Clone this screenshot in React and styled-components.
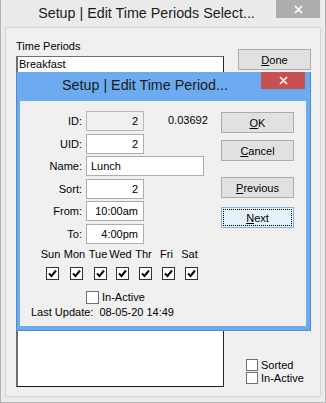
import React from 'react';
import styled, { createGlobalStyle } from 'styled-components';

const Global = createGlobalStyle`
  html, body {
    margin: 0;
    padding: 0;
    background: #fff;
    overflow: hidden;
  }
  body {
    font-family: "Liberation Sans", Arial, sans-serif;
    font-size: 11px;
    color: #000;
  }
`;

const Window = styled.div`
  position: relative;
  width: 326px;
  height: 403px;
  box-sizing: border-box;
  display: flex;
  flex-direction: column;
  background: #ebebeb;
  border: 1px solid #b4b4b4;
  border-top: none;
  padding: 0 4px 5px 4px;
`;

const TitleBar = styled.div`
  display: flex;
  height: ${p => p.$h}px;
  flex-shrink: 0;
  background: ${p => p.$bg};
`;

const Title = styled.div`
  flex: 1;
  display: flex;
  align-items: center;
  justify-content: center;
  padding-left: 12px;
  padding-bottom: ${p => p.$pb || 0}px;
  font-size: 14.3px;
  color: #1b1b1b;
  white-space: nowrap;
`;

const CloseBtn = styled.div`
  width: 44px;
  height: ${p => p.$h}px;
  margin-right: ${p => p.$mr}px;
  background: ${p => p.$bg};
  display: flex;
  align-items: center;
  justify-content: center;
`;

const Client = styled.div`
  flex: 1;
  display: flex;
  background: #f0f0f0;
  border: 1px solid #d6d6d6;
  padding: 12px 0 9px 10px;
`;

const LeftCol = styled.div`
  width: 208px;
  display: flex;
  flex-direction: column;
`;

const Caption = styled.div`
  line-height: 13px;
  margin-bottom: 3px;
`;

const ListBox = styled.div`
  flex: 1;
  box-sizing: border-box;
  background: #fff;
  border-style: solid;
  border-width: 1px 1px 1px 2px;
  border-color: #6e6e6e #262626 #1a1a1a #6e6e6e;
`;

const ListRow = styled.div`
  padding-left: 1px;
  line-height: 14px;
`;

const RightCol = styled.div`
  margin-left: 14px;
  padding-top: 9px;
  padding-bottom: 3px;
  display: flex;
  flex-direction: column;
`;

const Button = styled.div`
  box-sizing: border-box;
  width: 73px;
  height: 21px;
  margin-top: ${p => p.$mt || 0}px;
  display: flex;
  align-items: center;
  justify-content: center;
  background: ${p => (p.$focus ? '#e5f1fb' : '#e1e1e1')};
  border: 1px solid ${p => (p.$focus ? '#7eb4ea' : '#adadad')};
  padding: 2px;
`;

const FocusRing = styled.div`
  flex: 1;
  align-self: stretch;
  display: flex;
  align-items: center;
  justify-content: center;
  outline: ${p => (p.$on ? '1px dotted #000' : 'none')};
`;

const Checks = styled.div`
  margin-top: auto;
  margin-left: 8px;
  display: flex;
  flex-direction: column;
  gap: 1px;
`;

const CheckRow = styled.div`
  display: flex;
  align-items: center;
  gap: ${p => p.$gap || 3}px;
  line-height: 12px;
`;

const Box = styled.span`
  box-sizing: border-box;
  width: ${p => p.$size || 13}px;
  height: ${p => p.$size || 13}px;
  display: inline-flex;
  align-items: center;
  justify-content: center;
  background: #fff;
  border: 1px solid ${p => (p.$checked ? '#333' : '#707070')};
`;

const Dialog = styled.div`
  position: absolute;
  left: 15px;
  top: 72px;
  width: 295px;
  height: 259px;
  box-sizing: border-box;
  display: flex;
  flex-direction: column;
  background: #6cabef;
  border: 1px solid #4f8dd3;
  border-top: none;
`;

const DialogBody = styled.div`
  flex: 1;
  margin: 0 4px 4px 3px;
  background: #f0f0f0;
  display: flex;
  padding-top: 10px;
`;

const FormCol = styled.div`
  width: 201px;
  display: flex;
  flex-direction: column;
`;

const Fields = styled.div`
  display: grid;
  grid-template-columns: 62px auto;
  grid-auto-rows: 20px;
  column-gap: 4px;
  row-gap: 2.6px;
`;

const Label = styled.div`
  display: flex;
  align-items: center;
  justify-content: flex-end;
`;

const FieldCell = styled.div`
  display: flex;
  align-items: center;
`;

const Input = styled.input`
  box-sizing: border-box;
  width: ${p => p.$w}px;
  height: 20px;
  margin: 0;
  padding: 0 ${p => (p.$left ? 0 : 5)}px 0 ${p => (p.$left ? 4 : 0)}px;
  border: 1px solid ${p => (p.$ro ? '#b8b8b8' : '#adadad')};
  background: ${p => (p.$ro ? '#f0f0f0' : '#fff')};
  font-family: inherit;
  font-size: 11px;
  color: #000;
  text-align: ${p => (p.$left ? 'left' : 'right')};
  outline: none;
`;

const Note = styled.span`
  margin-left: 24px;
  margin-top: -2px;
`;

const Days = styled.div`
  display: grid;
  grid-template-columns: 23px 25px 22px 23px 23px 23px 23px;
  grid-template-rows: 13px 13px;
  row-gap: 6px;
  margin: 4px 0 0 21px;
`;

const DayName = styled.div`
  justify-self: center;
  padding-right: 4px;
  line-height: 13px;
`;

const DayBox = styled.div`
  justify-self: center;
  display: flex;
`;

const InactiveRow = styled(CheckRow)`
  margin-top: 11px;
  padding-left: 66px;
  line-height: 13px;
`;

const LastUpdate = styled.div`
  margin-top: 2px;
  padding-left: 11px;
  line-height: 13px;
  white-space: nowrap;
`;

const Stamp = styled.span`
  margin-left: 6px;
`;

const ButtonCol = styled.div`
  display: flex;
  flex-direction: column;
  padding-top: 1px;
`;

const Cross = () => (
  <svg width="9" height="9" viewBox="0 0 9 9">
    <path d="M1 1 L8 8 M8 1 L1 8" stroke="#fff" strokeWidth="1.7" />
  </svg>
);

const Tick = () => (
  <svg width="11" height="11" viewBox="0 0 11 11">
    <path d="M2 5.5 L4.5 8 L9 2.5" fill="none" stroke="#000" strokeWidth="2" />
  </svg>
);

const CheckBox = ({ checked, size }) => (
  <Box $checked={checked} $size={size}>{checked && <Tick />}</Box>
);

const days = ['Sun', 'Mon', 'Tue', 'Wed', 'Thr', 'Fri', 'Sat'];

const fields = [
  { label: 'ID:', value: '2', w: 58, ro: true, note: '0.03692' },
  { label: 'UID:', value: '2', w: 58 },
  { label: 'Name:', value: 'Lunch', w: 118, left: true },
  { label: 'Sort:', value: '2', w: 58 },
  { label: 'From:', value: '10:00am', w: 58 },
  { label: 'To:', value: '4:00pm', w: 58 },
];

const buttons = [
  { key: 'O', rest: 'K', mt: 0 },
  { key: 'C', rest: 'ancel', mt: 7 },
  { key: 'P', rest: 'revious', mt: 16 },
  { key: 'N', rest: 'ext', mt: 9, focus: true },
];

export default function App() {
  return (
    <>
      <Global />
      <Window>
        <TitleBar $h={27} $bg="#ebebeb">
          <Title $pb={2}>Setup | Edit Time Periods Select...</Title>
          <CloseBtn $h={18} $mr={1} $bg="#adadad"><Cross /></CloseBtn>
        </TitleBar>
        <Client>
          <LeftCol>
            <Caption>Time Periods</Caption>
            <ListBox>
              <ListRow>Breakfast</ListRow>
            </ListBox>
          </LeftCol>
          <RightCol>
            <Button><FocusRing><u>D</u>one</FocusRing></Button>
            <Checks>
              <CheckRow $gap={3}><CheckBox size={12} /><span>Sorted</span></CheckRow>
              <CheckRow $gap={3}><CheckBox size={12} /><span>In-Active</span></CheckRow>
            </Checks>
          </RightCol>
        </Client>

        <Dialog>
          <TitleBar $h={29} $bg="transparent">
            <Title $pb={4}>Setup | Edit Time Period...</Title>
            <CloseBtn $h={17} $mr={5} $bg="#c75050"><Cross /></CloseBtn>
          </TitleBar>
          <DialogBody>
            <FormCol>
              <Fields>
                {fields.map(f => (
                  <React.Fragment key={f.label}>
                    <Label>{f.label}</Label>
                    <FieldCell>
                      <Input readOnly value={f.value} $w={f.w} $ro={f.ro} $left={f.left} />
                      {f.note && <Note>{f.note}</Note>}
                    </FieldCell>
                  </React.Fragment>
                ))}
              </Fields>
              <Days>
                {days.map(d => <DayName key={d}>{d}</DayName>)}
                {days.map(d => <DayBox key={d + 'b'}><CheckBox checked /></DayBox>)}
              </Days>
              <InactiveRow $gap={3}><CheckBox /><span>In-Active</span></InactiveRow>
              <LastUpdate>Last Update:<Stamp>08-05-20 14:49</Stamp></LastUpdate>
            </FormCol>
            <ButtonCol>
              {buttons.map(b => (
                <Button key={b.key} $mt={b.mt} $focus={b.focus}>
                  <FocusRing $on={b.focus}><u>{b.key}</u>{b.rest}</FocusRing>
                </Button>
              ))}
            </ButtonCol>
          </DialogBody>
        </Dialog>
      </Window>
    </>
  );
}
